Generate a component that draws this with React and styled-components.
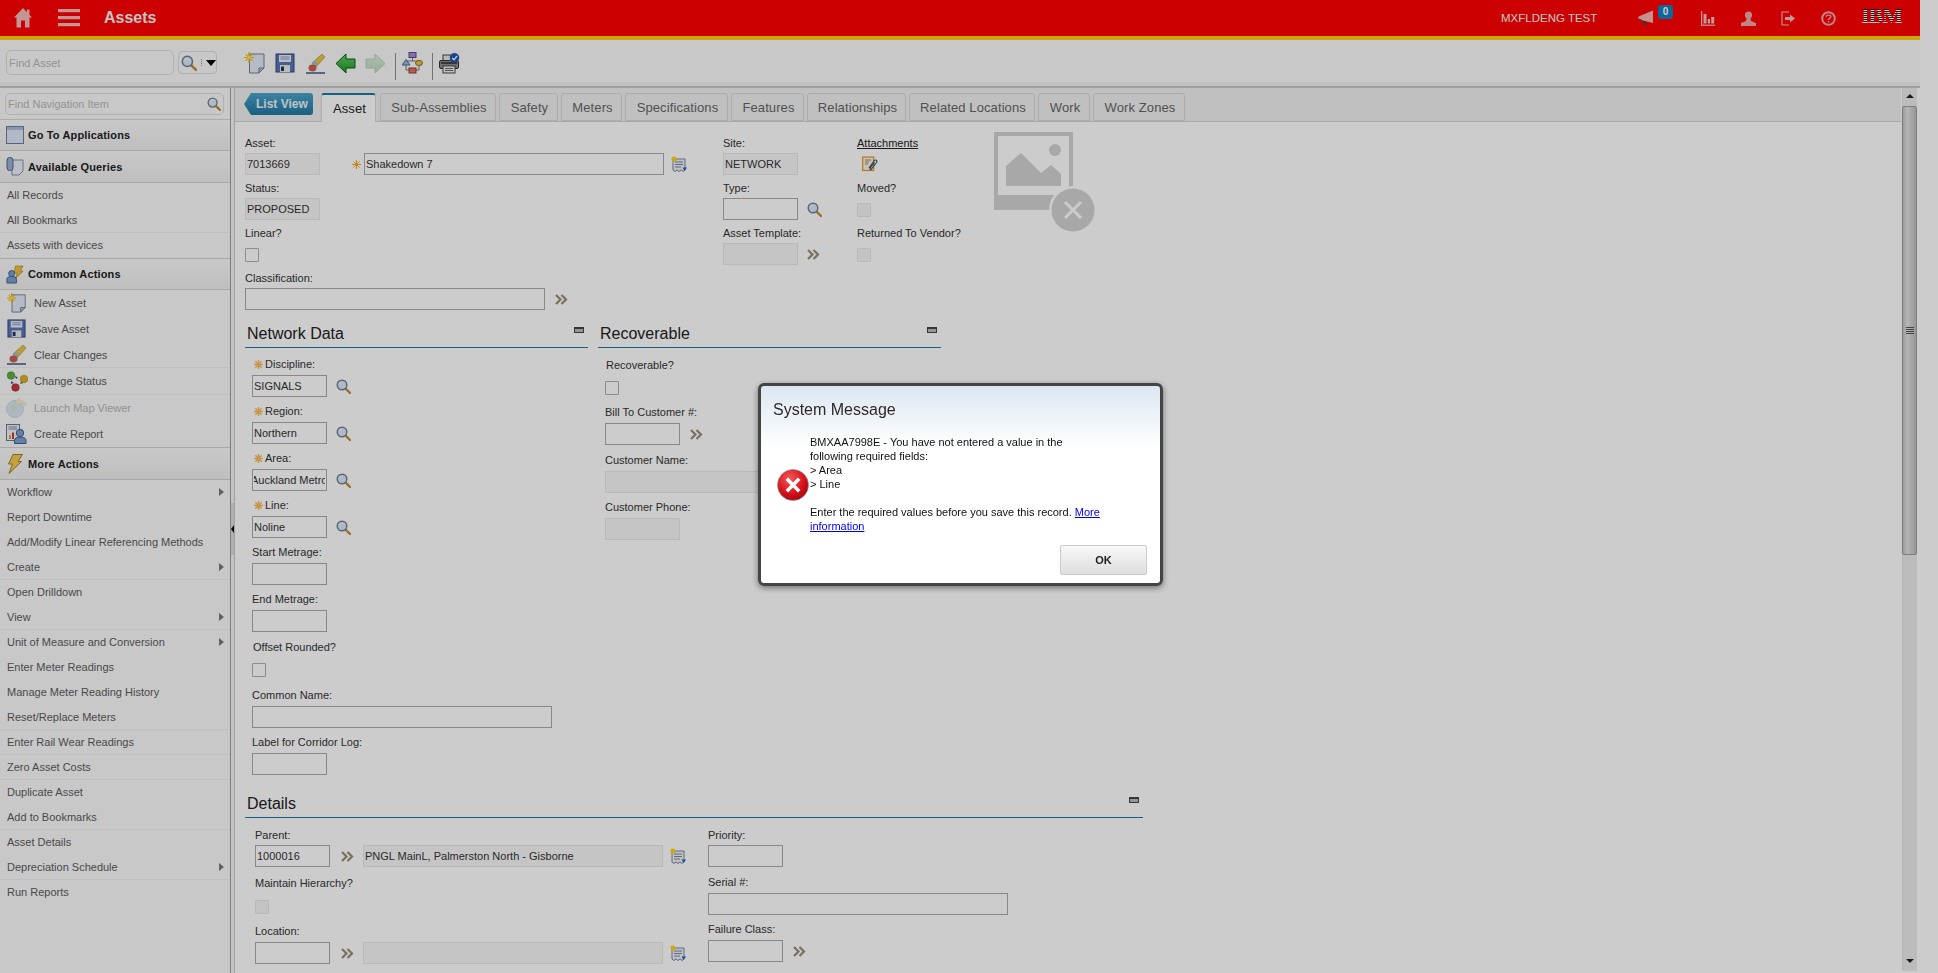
import React from "react";
import styled, { createGlobalStyle } from "styled-components";

const Global = createGlobalStyle`
  html, body { margin: 0; padding: 0; background: #fff; overflow: hidden; }
  body { font-family: "Liberation Sans", Arial, sans-serif; font-size: 11px; color: #333; }
  * { box-sizing: border-box; }
`;

const Shell = styled.div`
  display: flex;
  width: 1938px;
  height: 973px;
  overflow: hidden;
`;
const Page = styled.div`
  width: 1920px;
  display: flex;
  flex-direction: column;
`;
const Scrim = styled.div`
  position: fixed;
  inset: 0;
  background: rgba(0, 0, 0, 0.2);
`;

/* top bar */
const Header = styled.header`
  height: 40px;
  flex: none;
  display: flex;
  align-items: flex-start;
  background: #ff0000;
  border-bottom: 4px solid #ffd010;
  padding: 0 18px 0 14px;
`;
const Slot = styled.span`
  display: flex;
  align-items: center;
  justify-content: center;
  height: 36px;
  width: ${(p) => p.$w || 40}px;
  margin-left: ${(p) => p.$ml || 0}px;
  position: relative;
`;
const AppTitle = styled.span`
  margin-left: 24px;
  line-height: 36px;
  font-size: 16px;
  font-weight: bold;
  color: #f4f4f4;
`;
const UserName = styled.span`
  margin-left: auto;
  width: 94px;
  white-space: nowrap;
  line-height: 36px;
  font-size: 11.5px;
  color: #f6f6f6;
`;
const Badge = styled.span`
  position: absolute;
  left: 20px;
  top: 5px;
  width: 15px;
  height: 14px;
  border-radius: 3px;
  background: #1180c4;
  color: #fff;
  font-size: 10px;
  font-weight: bold;
  line-height: 14px;
  text-align: center;
`;
const IbmMark = styled.span`
  margin-left: 13px;
  width: 41px;
  line-height: 32px;
  font-family: "Liberation Serif", serif;
  font-size: 22px;
  font-weight: bold;
  letter-spacing: -1px;
  white-space: nowrap;
  background: repeating-linear-gradient(#fff 0, #fff 1px, #222 1px, #222 2px);
  -webkit-background-clip: text;
  background-clip: text;
  color: transparent;
`;

/* toolbar */
const Toolbar = styled.div`
  height: 48px;
  flex: none;
  display: flex;
  align-items: flex-start;
  padding: 10px 0 0 6px;
  background: linear-gradient(#fafafa 0, #fafafa 42px, #f0f0f0 42px);
  border-bottom: 2px solid #c8c8c8;
`;
const FindBox = styled.input`
  width: ${(p) => p.$w}px;
  height: ${(p) => p.$h}px;
  border: 1px solid #dcdcdc;
  border-radius: 5px;
  background: #fbfbfb;
  padding: 0 2px;
  font: 11px "Liberation Sans", Arial, sans-serif;
  &::placeholder { color: #b8b8b8; opacity: 1; }
`;
const FindButton = styled.div`
  width: 39px;
  height: 23px;
  margin: 1px 0 0 4px;
  display: flex;
  align-items: center;
  gap: 4px;
  padding-left: 2px;
  border: 1px solid #dcdcdc;
  border-radius: 4px;
`;
const Dots = styled.span`
  width: 1px;
  height: 7px;
  border-left: 1px dotted #999;
`;
const Caret = styled.span`
  width: 0;
  height: 0;
  border: 5px solid transparent;
  border-top: 6px solid #000;
  border-bottom: 0;
`;
const ToolGap = styled.span`
  width: 23px;
`;
const ToolSlot = styled.span`
  width: 30px;
  height: 26px;
  display: flex;
  align-items: center;
  justify-content: center;
  margin-left: ${(p) => p.$ml || 0}px;
`;
const ToolSep = styled.span`
  width: 1px;
  height: 27px;
  margin: 3px 0 0 5px;
  background: #8f8f86;
`;

/* body */
const Body = styled.div`
  flex: 1;
  min-height: 0;
  display: flex;
`;
const Sidebar = styled.nav`
  width: 230px;
  flex: none;
  background: #fafafa;
  overflow: hidden;
`;
const NavSearch = styled.div`
  height: 32px;
  padding: 5px 5px 0;
  border-bottom: 1px solid #d8d8d8;
  position: relative;
`;
const NavSearchIcon = styled.span`
  position: absolute;
  right: 9px;
  top: 9px;
  display: flex;
`;
const NavHead = styled.div`
  height: ${(p) => p.$h || 31}px;
  display: flex;
  align-items: center;
  padding-left: 6px;
  gap: 4px;
  font-weight: bold;
  font-size: 11px;
  letter-spacing: 0.15px;
  color: #222;
  background: linear-gradient(#fbfbfb, #efefef);
  border-bottom: 1px solid #d2d2d2;
  border-top: ${(p) => (p.$ruled ? "1px solid #d2d2d2" : "0")};
`;
const NavHeadIcon = styled.span`
  width: 18px;
  display: flex;
  justify-content: center;
`;
const NavItem = styled.div`
  height: ${(p) => p.$h || 25}px;
  display: flex;
  align-items: center;
  padding: 0 7px;
  color: ${(p) => (p.$off ? "#b5b5b5" : "#5a5a5a")};
  border-bottom: 1px solid ${(p) => (p.$sep ? "#f0f0f0" : "transparent")};
`;
const NavIcon = styled.span`
  width: 27px;
  margin: 0 4px 0 -4px;
  display: flex;
  justify-content: center;
`;
const SubArrow = styled.span`
  margin-left: auto;
  margin-right: -1px;
  width: 0;
  height: 0;
  border: 4px solid transparent;
  border-left: 5px solid #7a7a7a;
  border-right: 0;
`;
const Splitter = styled.div`
  width: 5px;
  flex: none;
  border-left: 1px solid #9f9f9f;
  border-right: 1px solid #c8c8c8;
  background: #f6f6f6;
  padding-top: 415px;
`;
const SplitGrip = styled.div`
  height: 52px;
  background: #dcdcdc;
  display: flex;
  align-items: center;
`;
const SplitArrow = styled.span`
  width: 0;
  height: 0;
  border: 4px solid transparent;
  border-right: 3px solid #000;
  border-left: 0;
`;

const Main = styled.main`
  flex: 1;
  min-width: 0;
  overflow: hidden;
`;
const TabBar = styled.div`
  height: 34px;
  display: flex;
  align-items: flex-start;
  padding: 5px 0 0 9px;
  background: #f0f0f0;
  border-bottom: 1px solid #d4d4d4;
`;
const ListView = styled.div`
  width: 69px;
  height: 22px;
  margin-right: 8px;
  padding-left: 12px;
  line-height: 22px;
  font-size: 12px;
  font-weight: bold;
  color: #f2f2f2;
  border-radius: 0 3px 3px 0;
  background: linear-gradient(#4aa3cc, #1f78a3);
  clip-path: polygon(0 50%, 7px 0, 100% 0, 100% 100%, 7px 100%);
`;
const Tab = styled.div`
  height: ${(p) => (p.$active ? 29 : 28)}px;
  width: ${(p) => p.$w}px;
  margin-right: ${(p) => (p.$active ? 4 : 3)}px;
  padding-left: 2px;
  text-align: center;
  line-height: 27px;
  font-size: 13px;
  letter-spacing: 0.1px;
  white-space: nowrap;
  color: ${(p) => (p.$active ? "#222" : "#666")};
  background: ${(p) => (p.$active ? "#fff" : "#f0f0f0")};
  border: 1px solid #d8d8d8;
  border-bottom: ${(p) => (p.$active ? "0" : "1px solid #d8d8d8")};
  border-top: ${(p) => (p.$active ? "2px solid #1a7aa8" : "1px solid #d8d8d8")};
  border-radius: 3px 3px 0 0;
`;
const Form = styled.div`
  padding: 14px 0 0 10px;
  background: #fff;
`;
const Row = styled.div`
  display: flex;
  align-items: flex-start;
  gap: ${(p) => p.$gap || 0}px;
`;
const Col = styled.div`
  width: ${(p) => p.$w}px;
  flex: none;
`;
const Field = styled.div`
  height: ${(p) => p.$h || 45}px;
`;
const Label = styled.div`
  width: fit-content;
  height: 14px;
  line-height: 14px;
  margin-bottom: ${(p) => p.$mb || 3}px;
  display: flex;
  align-items: center;
  white-space: nowrap;
  color: #333;
  padding-left: ${(p) => p.$pl || 0}px;
`;
const LinkLabel = styled(Label)`
  text-decoration: underline;
  color: #222;
`;
const Controls = styled.div`
  height: 22px;
  display: flex;
  align-items: center;
`;
const Input = styled.input`
  width: ${(p) => p.$w || 75}px;
  height: 22px;
  flex: none;
  padding: 0 1px;
  text-indent: ${(p) => p.$indent || 0}px;
  border: 1px solid ${(p) => (p.$ro ? "#e8e8e8" : "#ababab")};
  background: ${(p) => (p.$ro ? "#f7f7f7" : "#fff")};
  font: 11px "Liberation Sans", Arial, sans-serif;
  color: #333;
  outline: none;
`;
const Check = styled.span`
  width: 14px;
  height: 14px;
  margin-top: 2px;
  border: 1px solid ${(p) => (p.$ro ? "#e6e6e6" : "#b0b0b0")};
  border-radius: 1px;
  background: ${(p) => (p.$ro ? "#f4f4f4" : "#fff")};
`;
const Glyph = styled.span`
  display: flex;
  flex: none;
  margin-top: ${(p) => p.$mt || 0}px;
  margin-left: ${(p) => p.$ml || 0}px;
  margin-right: ${(p) => p.$mr || 0}px;
`;
const SectionHead = styled.div`
  width: ${(p) => p.$w}px;
  height: ${(p) => p.$h}px;
  display: flex;
  align-items: flex-end;
  justify-content: space-between;
  padding: 0 4px 2px 2px;
  border-bottom: 1px solid #1c7ba6;
  font-size: 16px;
  line-height: 22px;
  color: #222;
`;
const Collapse = styled.span`
  width: 10px;
  height: 6px;
  margin-bottom: 12px;
  border: 1px solid #444;
  border-top-width: 2px;
  background: #bbb;
`;
const SectionBody = styled.div`
  padding: ${(p) => p.$pt || 9}px 0 0 ${(p) => p.$pl || 7}px;
`;
const Scrollbar = styled.div`
  width: 15px;
  flex: none;
  margin: 0 3px 2px 1px;
  display: flex;
  flex-direction: column;
  align-items: center;
  background: #ececec;
  border-left: 1px solid #e2e2e2;
`;
const ScrollEnd = styled.div`
  height: 18px;
  flex: none;
  padding-top: 6px;
  margin-top: ${(p) => (p.$bottom ? "auto" : "0")};
`;
const ScrollArrow = styled.div`
  width: 0;
  height: 0;
  border: 4px solid transparent;
  ${(p) => (p.$down ? "border-top: 4px solid #222; border-bottom: 0;" : "border-bottom: 4px solid #222; border-top: 0;")}
`;
const Thumb = styled.div`
  width: 15px;
  height: 449px;
  flex: none;
  margin-left: -1px;
  border: 1px solid #9a9a9a;
  border-radius: 2px;
  background: linear-gradient(90deg, #c4c4c4, #e4e4e4 35%, #d2d2d2 60%, #bcbcbc);
  display: flex;
  align-items: center;
  justify-content: center;
`;
const Grip = styled.div`
  width: 8px;
  height: 8px;
  background: repeating-linear-gradient(#555 0, #555 1px, transparent 1px, transparent 2px);
`;

/* dialog */
const Dialog = styled.div`
  position: fixed;
  left: 758px;
  top: 383px;
  width: 405px;
  height: 203px;
  border: 3px solid #444;
  border-radius: 6px;
  background: linear-gradient(#dce7f2 0, #fff 62px);
  box-shadow: 0 2px 6px rgba(0, 0, 0, 0.45);
  padding: 12px 12px 0;
  color: #111;
`;
const DialogTitle = styled.div`
  font-size: 16px;
  line-height: 24px;
  color: #2a2a2a;
`;
const DialogBody = styled.div`
  display: flex;
  align-items: center;
  margin-top: 13px;
  height: 98px;
`;
const DialogIcon = styled.span`
  width: 33px;
  margin-left: 4px;
  display: flex;
  flex: none;
  margin-top: 2px;
`;
const DialogText = styled.p`
  margin: 0;
  width: 300px;
  font-size: 11px;
  line-height: 14px;
  a { color: #0000ee; }
`;
const DialogFoot = styled.div`
  display: flex;
  justify-content: flex-end;
  padding: 12px 1px 0 0;
`;
const OkButton = styled.button`
  width: 87px;
  height: 30px;
  border: 1px solid #ccc;
  border-radius: 2px;
  background: linear-gradient(#f8f8f8, #dedede);
  font: bold 11px "Liberation Sans", Arial, sans-serif;
  color: #222;
`;

/* drawn icons */
const HomeIcon = () => (
  <svg width="18" height="20" viewBox="0 0 18 20" fill="#f4bcbc">
    <path d="M9 0 L18 9.5 H15.5 V19.5 H11 V12.5 H7 V19.5 H2.5 V9.5 H0 Z" />
    <rect x="13" y="1.5" width="2.5" height="5" />
  </svg>
);
const MenuIcon = () => (
  <svg width="22" height="18" fill="#f4bcbc">
    <rect width="22" height="3.2" y="0" />
    <rect width="22" height="3.2" y="7" />
    <rect width="22" height="3.2" y="14" />
  </svg>
);
const MegaphoneIcon = () => (
  <svg width="16" height="16" viewBox="0 0 16 16">
    <path d="M15 0.5 V13 L5 10.5 L0.5 9 V6.5 Z" fill="#f5b5b5" />
    <path d="M4 10.5 L6 15 H9 L7.5 11.2 Z M1 8.5 L4 10 L1.5 10 Z" fill="#444" />
  </svg>
);
const ChartIcon = () => (
  <svg width="14" height="15" fill="#f5c0c0">
    <rect x="0" y="0" width="1.2" height="15" />
    <rect x="0" y="13.6" width="14" height="1.2" />
    <rect x="2.5" y="3" width="3" height="9.5" />
    <rect x="6.8" y="8" width="2.2" height="4.5" />
    <rect x="10.2" y="6" width="3" height="6.5" />
  </svg>
);
const PersonIcon = () => (
  <svg width="15" height="15" fill="#f1a7a7">
    <circle cx="7.5" cy="4" r="3.6" />
    <path d="M5.5 7 H9.5 L10 10 L15 12 V15 H0 V12 L5 10 Z" />
  </svg>
);
const LogoutIcon = () => (
  <svg width="15" height="15" fill="none" stroke="#f5c0c0" strokeWidth="1.1">
    <path d="M8 1 H1 V14 H8" />
    <path d="M4 6 H9 V3.5 L14 7.5 L9 11.5 V9 H4 Z" fill="#f5c0c0" stroke="none" />
  </svg>
);
const HelpIcon = () => (
  <svg width="15" height="15" viewBox="0 0 15 15">
    <circle cx="7.5" cy="7.5" r="6.3" fill="none" stroke="#f1a7a7" strokeWidth="2" />
    <path d="M5.2 5.8 C5.4 3.6 9.8 3.6 9.8 5.8 C9.8 7.4 7.5 7.2 7.5 9" fill="none" stroke="#f1a7a7" strokeWidth="1.4" />
    <rect x="6.8" y="10" width="1.5" height="1.5" fill="#f1a7a7" />
  </svg>
);
const SearchIcon = ({ size = 15 }) => (
  <svg width={size} height={size} viewBox="0 0 15 15">
    <path d="M9.5 9.5 L14 14" stroke="#c08a30" strokeWidth="2.4" strokeLinecap="round" />
    <circle cx="6" cy="6" r="4.8" fill="#dbe7f5" stroke="#6d7f96" strokeWidth="1.4" />
    <path d="M3.5 5 C4 3.6 5 3 6.4 3" fill="none" stroke="#fff" strokeWidth="1" />
  </svg>
);
const ChevronIcon = () => (
  <svg width="13" height="11" fill="none" stroke="#9a8c78" strokeWidth="2.2">
    <path d="M1 1 L5.5 5.5 L1 10" />
    <path d="M6.5 1 L11 5.5 L6.5 10" />
  </svg>
);
const StarIcon = ({ faint }) => (
  <svg width="9" height="9" viewBox="0 0 9 9" stroke="#f5a623" strokeWidth={faint ? 1.5 : 1} opacity={faint ? 0.75 : 1}>
    <path d="M4.5 0 V9 M0 4.5 H9 M1.3 1.3 L7.7 7.7 M7.7 1.3 L1.3 7.7" />
  </svg>
);
const DetailIcon = () => (
  <svg width="17" height="17" viewBox="0 0 17 17">
    <path d="M2 3 H14 V14 L12 15.5 L10 14 L8 15.5 L6 14 L4 15.5 L2 14 Z" fill="#eef2f8" stroke="#76849a" />
    <path d="M4 6 H12 M4 8.5 H12 M4 11 H10" stroke="#76849a" />
    <circle cx="3" cy="3" r="2.6" fill="#ffd21a" />
    <path d="M11.5 11.5 H16 L13.7 15 Z" fill="#2a62b8" />
  </svg>
);
const NewDocIcon = ({ size = 22 }) => (
  <svg width={size} height={size} viewBox="0 0 22 22">
    <path d="M5.5 2 H20 V16 L15 21 H5.5 Z" fill="#e4eaf4" stroke="#6f7f9c" />
    <path d="M20 16 H15 V21 Z" fill="#b9c4d8" stroke="#6f7f9c" />
    <path d="M5 0 V11 M0 5.5 H10 M1.8 2.3 L8.2 8.7 M8.2 2.3 L1.8 8.7" stroke="#f4b400" strokeWidth="1.2" />
    <circle cx="5" cy="5.5" r="1.8" fill="#ffe14a" />
  </svg>
);
const SaveIcon = ({ size = 20 }) => (
  <svg width={size} height={size} viewBox="0 0 20 20">
    <rect x="1" y="1" width="18" height="18" fill="#5b76b8" stroke="#34497e" />
    <rect x="4" y="2" width="12" height="7" fill="#e5eaf4" />
    <path d="M5.5 4 H14.5 M5.5 6 H14.5" stroke="#8899bb" />
    <rect x="5" y="12" width="10" height="7" fill="#e9e9e9" />
    <rect x="6" y="13.5" width="3" height="4.5" fill="#26375f" />
  </svg>
);
const BrushIcon = ({ size = 21 }) => (
  <svg width={size} height={size} viewBox="0 0 21 21">
    <path d="M1 20 H20" stroke="#34497e" strokeWidth="1.4" />
    <path d="M7 10 L17 1 L20 4 L11 14 Z" fill="#e9c34a" stroke="#a8862c" strokeWidth="0.6" />
    <path d="M6.5 10.5 L9.5 7.5 L13 11 L10.5 14 Z" fill="#9fc0c8" />
    <ellipse cx="7.5" cy="15" rx="4" ry="3.4" fill="#c8604e" />
  </svg>
);
const ArrowIcon = ({ back, ghost }) => (
  <svg width="21" height="21" viewBox="0 0 21 21" opacity={ghost ? 0.45 : 1}>
    <defs>
      <linearGradient id={back ? "arrowBack" : "arrowFwd"} x1="0" y1="0" x2="0" y2="1">
        <stop offset="0" stopColor={ghost ? "#b4dfb4" : "#5fcf5f"} />
        <stop offset="1" stopColor={ghost ? "#7cb77c" : "#1f9a2c"} />
      </linearGradient>
    </defs>
    <path
      d={back ? "M1 10.5 L11 1 V6 H20 V15 H11 V20 Z" : "M20 10.5 L10 1 V6 H1 V15 H10 V20 Z"}
      fill={`url(#${back ? "arrowBack" : "arrowFwd"})`}
      stroke={ghost ? "#6f9f6f" : "#0c5c18"}
    />
  </svg>
);
const FlowIcon = () => (
  <svg width="21" height="22" viewBox="0 0 21 22" fill="none">
    <path d="M10.5 5 V9 M4 9 V18 H8 M4 9 H17 V13 M17 13 V18 H13" stroke="#777" />
    <rect x="7" y="0.5" width="7" height="5" fill="#a78ad8" stroke="#5e4a8a" />
    <path d="M4 7.5 L8 13 H0 Z" fill="#8bbce4" stroke="#4c6f92" />
    <ellipse cx="17" cy="11" rx="3.5" ry="2.6" fill="#f1c14b" stroke="#8f6e1f" />
    <rect x="7" y="16" width="7" height="5" fill="#e0736a" stroke="#8c3a33" />
  </svg>
);
const PrintIcon = () => (
  <svg width="21" height="21" viewBox="0 0 21 21">
    <rect x="4" y="2" width="11" height="6" fill="#e8e8e8" stroke="#444" />
    <rect x="0.5" y="7.5" width="19" height="8" rx="1.5" fill="#8d8d8d" stroke="#333" />
    <rect x="2" y="9" width="16" height="2" fill="#444" />
    <rect x="4" y="13" width="12" height="7" fill="#f0f0f0" stroke="#444" />
    <path d="M6 15.5 H14 M6 17.5 H14" stroke="#666" />
    <circle cx="15.5" cy="4.8" r="4.8" fill="#1f57b0" />
    <path d="M13.3 5 L15 6.8 L18 3" fill="none" stroke="#fff" strokeWidth="1.3" />
  </svg>
);
const WindowIcon = () => (
  <svg width="18" height="18">
    <rect x="0.5" y="0.5" width="17" height="17" fill="#dfe8f5" stroke="#6d7f9f" />
    <rect x="1" y="1" width="16" height="3" fill="#a9bfe0" />
  </svg>
);
const QueryIcon = () => (
  <svg width="18" height="19" viewBox="0 0 18 19">
    <path d="M6 3 H17 V14 L13 18 H6 Z" fill="#ecf0f7" stroke="#8191ad" />
    <rect x="1" y="0.5" width="6" height="13" rx="2.5" fill="#9ab1d2" stroke="#50678f" />
  </svg>
);
const ActionsIcon = () => (
  <svg width="19" height="19" viewBox="0 0 19 19">
    <path d="M10 0.5 H18 L15 6 H18 L10 14 L12 8 H8.5 Z" fill="#f2c23e" stroke="#a77f1d" strokeWidth="0.7" />
    <circle cx="6" cy="8.5" r="3.2" fill="#7fa0cf" stroke="#3e5f90" />
    <path d="M1 18.5 V14.5 C1 12 3.5 11.6 6 11.6 C8.5 11.6 11 12 11 14.5 V18.5 Z" fill="#7fa0cf" stroke="#3e5f90" />
  </svg>
);
const StatusIcon = () => (
  <svg width="22" height="21" viewBox="0 0 22 21">
    <path d="M9 5 L12 6.5 L10 8 Z M14 13 L17 12 L16 9 Z M5 10 L8 12 L5 13 Z" fill="#335c8f" />
    <circle cx="5" cy="4.5" r="3.8" fill="#5fae3c" stroke="#3d7d24" strokeWidth="0.5" />
    <circle cx="18" cy="8" r="3.8" fill="#e0b020" stroke="#9c7a12" strokeWidth="0.5" />
    <circle cx="9.5" cy="16.5" r="3.8" fill="#c8393a" stroke="#8c2324" strokeWidth="0.5" />
  </svg>
);
const GlobeIcon = () => (
  <svg width="21" height="21" viewBox="0 0 21 21" opacity="0.35">
    <circle cx="9" cy="12" r="8.5" fill="#9dc2e4" stroke="#7f9db9" />
    <path d="M4 9 L9 7 L11 11 L7 15 Z" fill="#8fbf8a" />
    <path d="M9 5 L13 1 V3.5 C17 3.5 20 5 20 9 C18 7 16 6.5 13 6.5 V9 Z" fill="#efcf82" stroke="#b0914a" strokeWidth="0.5" />
  </svg>
);
const ReportIcon = () => (
  <svg width="21" height="20" viewBox="0 0 21 20">
    <rect x="0.5" y="0.5" width="13" height="16" fill="#eef2f8" stroke="#6a7892" />
    <path d="M2.5 3 H11 M2.5 5 H11" stroke="#7d8ba3" />
    <rect x="3" y="11" width="2" height="4" fill="#e0a52c" />
    <rect x="6" y="8.5" width="2" height="6.5" fill="#c8393a" />
    <circle cx="14" cy="9" r="3.7" fill="#7fa0cf" stroke="#3e5f90" />
    <path d="M8.5 19.5 V16.5 C8.5 14 11 13 14 13 C17 13 20 14 20 16.5 V19.5 Z" fill="#7fa0cf" stroke="#3e5f90" />
  </svg>
);
const BoltIcon = () => (
  <svg width="16" height="20" viewBox="0 0 16 20">
    <path d="M6 0.5 H15.5 L11 7.5 H14.5 L2 19.5 L5.5 10 H1.5 Z" fill="#f4ca55" stroke="#a77f1d" />
  </svg>
);
const AttachIcon = () => (
  <svg width="17" height="17" viewBox="0 0 17 17" fill="none">
    <rect x="0.7" y="1" width="11" height="13.5" stroke="#e0962a" strokeWidth="1.2" fill="#f8f2e2" />
    <path d="M3 4 H9 M3 6 H7 M3 8 H6" stroke="#9c8d70" />
    <path d="M7 12 L12 5 C13.5 3 16 4.5 14.5 6.5 L9.5 13 C8.5 14 7.5 13 8.2 12 L12.5 6.5" stroke="#3b4a66" strokeWidth="1.1" />
  </svg>
);
const NoImageIcon = () => (
  <svg width="104" height="102" viewBox="0 0 104 102">
    <rect x="0" y="0" width="79" height="78" fill="#d2d2d2" />
    <rect x="4" y="4" width="71" height="59" fill="#fff" />
    <path d="M12 54 V34 L27 21 L47 41 L57 33 L67 42 V54 Z" fill="#d2d2d2" />
    <circle cx="61" cy="18" r="6" fill="#d2d2d2" />
    <circle cx="79" cy="78" r="24" fill="#fff" />
    <circle cx="79" cy="78" r="21.5" fill="#d2d2d2" />
    <path d="M71 70 L87 86 M87 70 L71 86" stroke="#fff" strokeWidth="3" />
  </svg>
);
const ErrorIcon = () => (
  <svg width="32" height="32" viewBox="0 0 31 31">
    <defs>
      <radialGradient id="errFill" cx="0.4" cy="0.3" r="0.8">
        <stop offset="0" stopColor="#f35a5a" />
        <stop offset="0.6" stopColor="#d5101a" />
        <stop offset="1" stopColor="#8f0710" />
      </radialGradient>
    </defs>
    <circle cx="15.5" cy="15.5" r="15" fill="url(#errFill)" stroke="#8f8f8f" strokeWidth="0.6" />
    <path d="M9.5 9.5 L21.5 21.5 M21.5 9.5 L9.5 21.5" stroke="#fff" strokeWidth="3.4" />
  </svg>
);

const commonActions = [
  { text: "New Asset", icon: <NewDocIcon size={20} /> },
  { text: "Save Asset", icon: <SaveIcon size={19} /> },
  { text: "Clear Changes", icon: <BrushIcon size={21} />, sep: true },
  { text: "Change Status", icon: <StatusIcon />, sep: true, h: 27 },
  { text: "Launch Map Viewer", icon: <GlobeIcon />, off: true },
  { text: "Create Report", icon: <ReportIcon /> },
];
const moreActions = [
  { text: "Workflow", sub: true },
  { text: "Report Downtime" },
  { text: "Add/Modify Linear Referencing Methods" },
  { text: "Create", sub: true, sep: true },
  { text: "Open Drilldown" },
  { text: "View", sub: true, sep: true },
  { text: "Unit of Measure and Conversion", sub: true },
  { text: "Enter Meter Readings" },
  { text: "Manage Meter Reading History" },
  { text: "Reset/Replace Meters", sep: true },
  { text: "Enter Rail Wear Readings", sep: true },
  { text: "Zero Asset Costs", sep: true },
  { text: "Duplicate Asset" },
  { text: "Add to Bookmarks", sep: true },
  { text: "Asset Details" },
  { text: "Depreciation Schedule", sub: true, sep: true },
  { text: "Run Reports" },
];
const tabs = [
  ["Sub-Assemblies", 116],
  ["Safety", 59],
  ["Meters", 61],
  ["Specifications", 103],
  ["Features", 73],
  ["Relationships", 99],
  ["Related Locations", 126],
  ["Work", 52],
  ["Work Zones", 92],
];
const requiredFields = [
  ["Discipline:", "SIGNALS"],
  ["Region:", "Northern"],
  ["Area:", "Auckland Metro", -3],
  ["Line:", "Noline"],
];

const NavPanel = () => (
  <Sidebar>
    <NavSearch>
      <FindBox $w={219} $h={22} placeholder="Find Navigation Item" />
      <NavSearchIcon>
        <SearchIcon size={14} />
      </NavSearchIcon>
    </NavSearch>
    <NavHead>
      <NavHeadIcon><WindowIcon /></NavHeadIcon>
      Go To Applications
    </NavHead>
    <NavHead $h={32}>
      <NavHeadIcon><QueryIcon /></NavHeadIcon>
      Available Queries
    </NavHead>
    <NavItem>All Records</NavItem>
    <NavItem $sep>All Bookmarks</NavItem>
    <NavItem>Assets with devices</NavItem>
    <NavHead $ruled $h={32}>
      <NavHeadIcon><ActionsIcon /></NavHeadIcon>
      Common Actions
    </NavHead>
    {commonActions.map((a) => (
      <NavItem key={a.text} $h={a.h || 26} $sep={a.sep} $off={a.off}>
        <NavIcon>{a.icon}</NavIcon>
        {a.text}
      </NavItem>
    ))}
    <NavHead $ruled $h={33}>
      <NavHeadIcon><BoltIcon /></NavHeadIcon>
      More Actions
    </NavHead>
    {moreActions.map((a) => (
      <NavItem key={a.text} $sep={a.sep}>
        {a.text}
        {a.sub && <SubArrow />}
      </NavItem>
    ))}
  </Sidebar>
);

const AssetForm = () => (
  <Form>
    <Row>
      <Col $w={478}>
        <Field>
          <Label>Asset:</Label>
          <Controls>
            <Input $ro readOnly defaultValue="7013669" />
            <Glyph $ml={32} $mr={3}><StarIcon /></Glyph>
            <Input $w={300} readOnly defaultValue="Shakedown 7" />
            <Glyph $ml={7}><DetailIcon /></Glyph>
          </Controls>
        </Field>
        <Field>
          <Label>Status:</Label>
          <Controls><Input $ro readOnly defaultValue="PROPOSED" /></Controls>
        </Field>
        <Field>
          <Label>Linear?</Label>
          <Controls><Check /></Controls>
        </Field>
        <Field>
          <Label>Classification:</Label>
          <Controls>
            <Input $w={300} readOnly />
            <Glyph $ml={10}><ChevronIcon /></Glyph>
          </Controls>
        </Field>
      </Col>
      <Col $w={134}>
        <Field>
          <Label>Site:</Label>
          <Controls><Input $ro readOnly defaultValue="NETWORK" /></Controls>
        </Field>
        <Field>
          <Label>Type:</Label>
          <Controls>
            <Input readOnly />
            <Glyph $ml={9}><SearchIcon /></Glyph>
          </Controls>
        </Field>
        <Field>
          <Label>Asset Template:</Label>
          <Controls>
            <Input $ro readOnly />
            <Glyph $ml={9}><ChevronIcon /></Glyph>
          </Controls>
        </Field>
      </Col>
      <Col $w={137}>
        <Field>
          <LinkLabel>Attachments</LinkLabel>
          <Controls><Glyph $ml={5}><AttachIcon /></Glyph></Controls>
        </Field>
        <Field>
          <Label>Moved?</Label>
          <Controls><Check $ro /></Controls>
        </Field>
        <Field>
          <Label>Returned To Vendor?</Label>
          <Controls><Check $ro /></Controls>
        </Field>
      </Col>
      <Glyph $mt={-4}><NoImageIcon /></Glyph>
    </Row>

    <Row $gap={10}>
      <Col $w={343}>
        <SectionHead $w={343} $h={32}>
          Network Data
          <Collapse />
        </SectionHead>
        <SectionBody>
          {requiredFields.map(([label, value, indent]) => (
            <Field key={label} $h={47}>
              <Label $mb={4}>
                <Glyph $ml={2} $mr={2}><StarIcon faint /></Glyph>
                {label}
              </Label>
              <Controls>
                <Input readOnly defaultValue={value} $indent={indent} />
                <Glyph $ml={9}><SearchIcon /></Glyph>
              </Controls>
            </Field>
          ))}
          <Field $h={47}>
            <Label $mb={4}>Start Metrage:</Label>
            <Controls><Input readOnly /></Controls>
          </Field>
          <Field $h={48}>
            <Label $mb={4}>End Metrage:</Label>
            <Controls><Input readOnly /></Controls>
          </Field>
          <Field $h={48}>
            <Label $mb={4} $pl={1}>Offset Rounded?</Label>
            <Controls><Check /></Controls>
          </Field>
          <Field $h={47}>
            <Label $mb={4}>Common Name:</Label>
            <Controls><Input $w={300} readOnly /></Controls>
          </Field>
          <Field $h={47}>
            <Label $mb={4}>Label for Corridor Log:</Label>
            <Controls><Input readOnly /></Controls>
          </Field>
        </SectionBody>
      </Col>
      <Col $w={343}>
        <SectionHead $w={343} $h={32}>
          Recoverable
          <Collapse />
        </SectionHead>
        <SectionBody $pt={10}>
          <Field $h={47}>
            <Label $mb={4} $pl={1}>Recoverable?</Label>
            <Controls><Check /></Controls>
          </Field>
          <Field $h={48}>
            <Label $mb={4}>Bill To Customer #:</Label>
            <Controls>
              <Input readOnly />
              <Glyph $ml={10}><ChevronIcon /></Glyph>
            </Controls>
          </Field>
          <Field $h={47}>
            <Label $mb={4}>Customer Name:</Label>
            <Controls><Input $ro $w={300} readOnly /></Controls>
          </Field>
          <Field $h={47}>
            <Label $mb={4}>Customer Phone:</Label>
            <Controls><Input $ro readOnly /></Controls>
          </Field>
        </SectionBody>
      </Col>
    </Row>

    <SectionHead $w={898} $h={36}>
      Details
      <Collapse />
    </SectionHead>
    <SectionBody $pt={10} $pl={10}>
      <Row>
        <Col $w={453}>
          <Field $h={48}>
            <Label>Parent:</Label>
            <Controls>
              <Input readOnly defaultValue="1000016" />
              <Glyph $ml={11} $mr={9}><ChevronIcon /></Glyph>
              <Input $ro $w={300} readOnly defaultValue="PNGL MainL, Palmerston North - Gisborne" />
              <Glyph $ml={7}><DetailIcon /></Glyph>
            </Controls>
          </Field>
          <Field $h={48}>
            <Label $mb={5}>Maintain Hierarchy?</Label>
            <Controls><Check $ro /></Controls>
          </Field>
          <Field>
            <Label $mb={4}>Location:</Label>
            <Controls>
              <Input readOnly />
              <Glyph $ml={11} $mr={9}><ChevronIcon /></Glyph>
              <Input $ro $w={300} readOnly />
              <Glyph $ml={7}><DetailIcon /></Glyph>
            </Controls>
          </Field>
        </Col>
        <Col $w={320}>
          <Field $h={47}>
            <Label>Priority:</Label>
            <Controls><Input readOnly /></Controls>
          </Field>
          <Field $h={47}>
            <Label $mb={4}>Serial #:</Label>
            <Controls><Input $w={300} readOnly /></Controls>
          </Field>
          <Field>
            <Label $mb={4}>Failure Class:</Label>
            <Controls>
              <Input readOnly />
              <Glyph $ml={10}><ChevronIcon /></Glyph>
            </Controls>
          </Field>
        </Col>
      </Row>
    </SectionBody>
  </Form>
);

const App = () => (
  <Shell>
    <Global />
    <Page>
      <Header>
        <Slot $w={18}><HomeIcon /></Slot>
        <Slot $w={22} $ml={26}><MenuIcon /></Slot>
        <AppTitle>Assets</AppTitle>
        <UserName>MXFLDENG TEST</UserName>
        <Slot $w={16} $ml={43}>
          <MegaphoneIcon />
          <Badge>0</Badge>
        </Slot>
        <Slot $ml={34}><ChartIcon /></Slot>
        <Slot><PersonIcon /></Slot>
        <Slot><LogoutIcon /></Slot>
        <Slot><HelpIcon /></Slot>
        <IbmMark>IBM.</IbmMark>
      </Header>
      <Toolbar>
        <FindBox $w={168} $h={25} placeholder="Find Asset" />
        <FindButton>
          <SearchIcon size={16} />
          <Dots />
          <Caret />
        </FindButton>
        <ToolGap />
        <ToolSlot><NewDocIcon /></ToolSlot>
        <ToolSlot><SaveIcon /></ToolSlot>
        <ToolSlot><BrushIcon /></ToolSlot>
        <ToolSlot><ArrowIcon back /></ToolSlot>
        <ToolSlot><ArrowIcon ghost /></ToolSlot>
        <ToolSep />
        <ToolSlot $ml={1}><FlowIcon /></ToolSlot>
        <ToolSep />
        <ToolSlot $ml={1}><PrintIcon /></ToolSlot>
      </Toolbar>
      <Body>
        <NavPanel />
        <Splitter>
          <SplitGrip><SplitArrow /></SplitGrip>
        </Splitter>
        <Main>
          <TabBar>
            <ListView>List View</ListView>
            <Tab $active $w={55}>Asset</Tab>
            {tabs.map(([name, w]) => (
              <Tab key={name} $w={w}>{name}</Tab>
            ))}
          </TabBar>
          <AssetForm />
        </Main>
        <Scrollbar>
          <ScrollEnd><ScrollArrow /></ScrollEnd>
          <Thumb><Grip /></Thumb>
          <ScrollEnd $bottom><ScrollArrow $down /></ScrollEnd>
        </Scrollbar>
      </Body>
    </Page>
    <Scrim />
    <Dialog>
      <DialogTitle>System Message</DialogTitle>
      <DialogBody>
        <DialogIcon><ErrorIcon /></DialogIcon>
        <DialogText>
          BMXAA7998E - You have not entered a value in the<br />
          following required fields:<br />
          &gt; Area<br />
          &gt; Line<br />
          <br />
          Enter the required values before you save this record. <a href="#more">More information</a>
        </DialogText>
      </DialogBody>
      <DialogFoot>
        <OkButton>OK</OkButton>
      </DialogFoot>
    </Dialog>
  </Shell>
);

export default App;
